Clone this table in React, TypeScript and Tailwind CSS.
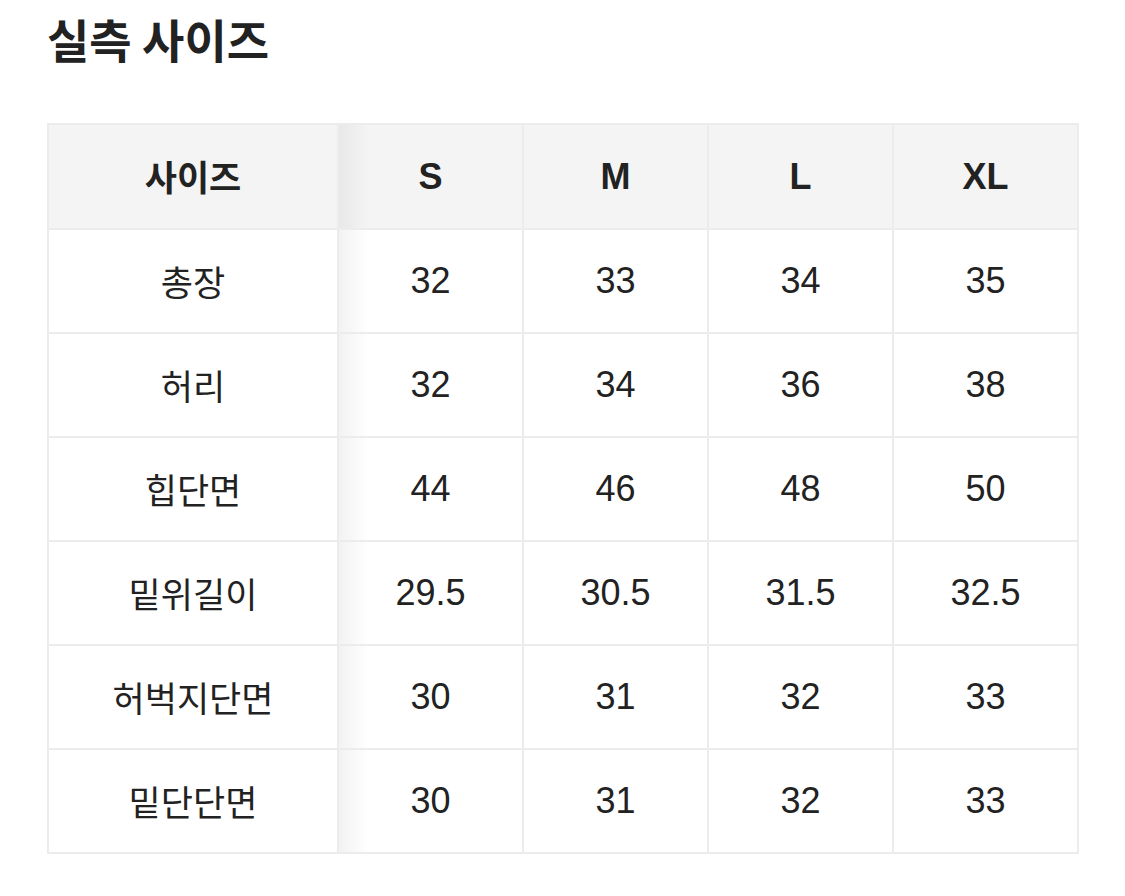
const SIZES = ["S", "M", "L", "XL"];

const ROWS: { label: string; values: string[] }[] = [
  { label: "총장", values: ["32", "33", "34", "35"] },
  { label: "허리", values: ["32", "34", "36", "38"] },
  { label: "힙단면", values: ["44", "46", "48", "50"] },
  { label: "밑위길이", values: ["29.5", "30.5", "31.5", "32.5"] },
  { label: "허벅지단면", values: ["30", "31", "32", "33"] },
  { label: "밑단단면", values: ["30", "31", "32", "33"] },
];

const FONT = "font-['Noto_Sans_CJK_KR','Liberation_Sans',sans-serif]";
const NUM = "font-['Liberation_Sans',sans-serif] text-[36px]";

function LabelCell({ children, header }: { children: string; header?: boolean }) {
  return (
    <td
      className={[
        "relative w-[290px] border-2 border-[#ececec] text-center text-[35px]",
        header ? "bg-[#f4f4f4] font-semibold" : "bg-white",
      ].join(" ")}
    >
      {children}
      <span className="pointer-events-none absolute top-0 -right-[32px] h-full w-[30px] bg-gradient-to-r from-black/[0.05] to-transparent" />
    </td>
  );
}

export default function App() {
  return (
    <div className={`min-h-screen bg-white px-[47px] pt-[6px] text-[#222] ${FONT}`}>
      <h1 className="text-[46px] font-bold leading-[64px]">실측 사이즈</h1>
      <table className="mt-[53px] w-[1030px] table-fixed border-collapse">
        <tbody>
          <tr className="h-[105px]">
            <LabelCell header>사이즈</LabelCell>
            {SIZES.map((s) => (
              <td
                key={s}
                className={`w-[185px] border-2 border-[#ececec] bg-[#f4f4f4] text-center font-semibold ${NUM}`}
              >
                {s}
              </td>
            ))}
          </tr>
          {ROWS.map((row) => (
            <tr key={row.label} className="h-[104px]">
              <LabelCell>{row.label}</LabelCell>
              {row.values.map((v, i) => (
                <td key={i} className={`border-2 border-[#ececec] text-center ${NUM}`}>
                  {v}
                </td>
              ))}
            </tr>
          ))}
        </tbody>
      </table>
    </div>
  );
}
